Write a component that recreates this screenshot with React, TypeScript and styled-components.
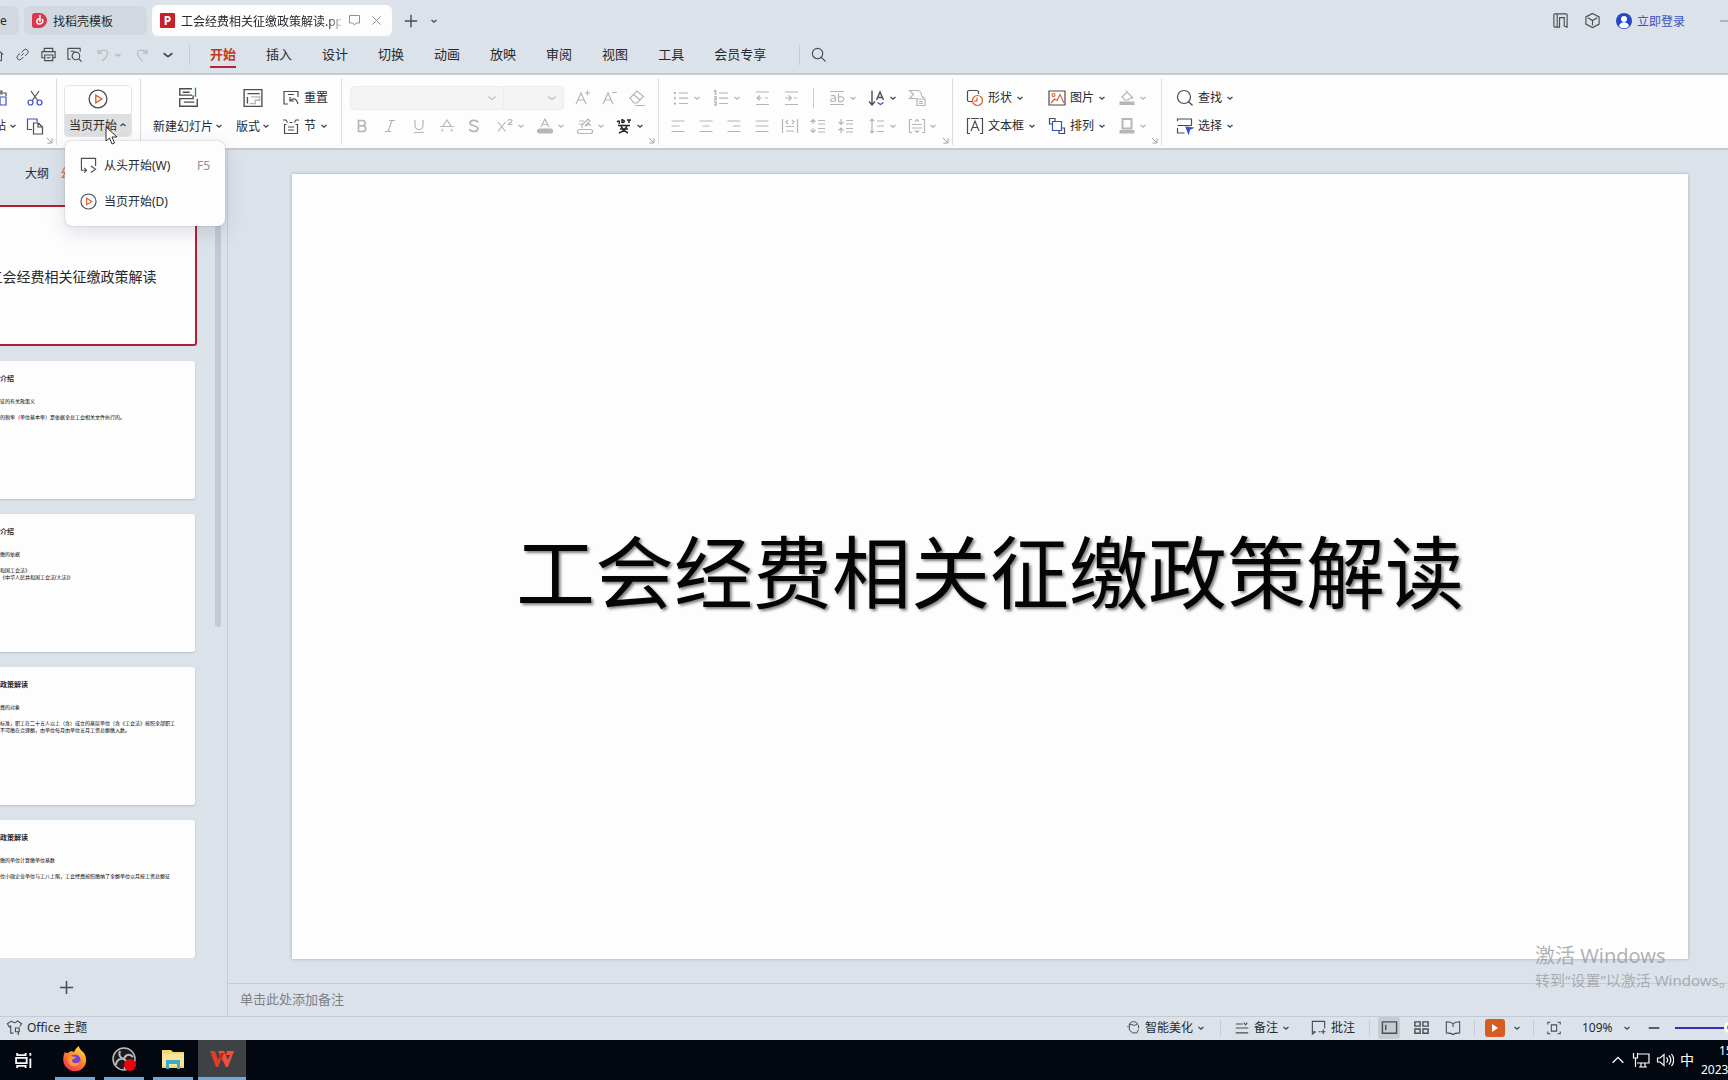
import React from "react";
import styled, { createGlobalStyle } from "styled-components";

const Global = createGlobalStyle`
  * { box-sizing: border-box; }
  html, body { margin: 0; padding: 0; overflow: hidden; }
  body, button, input, select, textarea {
    font-family: "Noto Sans", "Noto Sans CJK SC", sans-serif;
    font-size: 12px;
    color: #26292d;
  }
  button { border: 0; background: none; padding: 0; margin: 0; }
`;

const ink = "#4a4d52";
const faint = "#b4b6b9";
const blue = "#3d50c3";
const orange = "#d4632f";
const line = "#c5cbd4";
const chrome = "#dce2ea";

const Svg = styled.svg`
  flex: none;
  display: block;
  fill: none;
  stroke: currentColor;
  stroke-width: 1.2;
`;

const art: Record<string, React.ReactNode> = {
  home: <path d="M2 8.5 9 2.5l7 6M4 7v8.5h10V7M7.5 15v-5h3v5" />,
  link: <><path d="m7.5 10.5 3-3" /><path d="M8 6.500l2.500-2.800a3 3 0 0 1 4.400 4.300L12 10.500" /><path d="M10 12l-2.300 2.400a3 3 0 0 1-4.500-4.100L6 7.800" /></>,
  print: <path d="M4.500 6V2.500h9V6M4.500 12.500h-2.500V6h14v6.500h-2.500M5 9.500h8.500v6H5zM7 12.500h4" />,
  preview: <><path d="M5 14H2V2.500h13V6M5 5.500h4" /><circle cx="10.500" cy="10.500" r="4" /><path d="m13.500 13.500 3 3" /></>,
  undo: <path d="M3.500 2.500v4.500H8M3.500 7C8 1.500 15 3 14 8c-.5 3-3 5-6 8" />,
  redo: <path d="M14.500 2.500v4.500H10M14.500 7C10 1.500 3 3 4 8c.5 3 3 5 6 8" />,
  search: <><circle cx="8" cy="8" r="5.500" /><path d="m12 12 4.500 4.500" /></>,
  find: <><circle cx="8" cy="8" r="6.500" /><path d="m12.500 12.500 4 4" /></>,
  plus: <path d="M9 2v14M2 9h14" strokeWidth="1.600" />,
  close: <path d="m4 4 10 10m0-10L4 14" />,
  screen: <path d="M3 3h12v9h-4l-2 2.500L7 12H3z" />,
  paste: <><path d="M10 3.500H3v12h5M6 2h5v3H6zM12 4h3v3" /><path d="M9 8h6v8H9z" stroke={blue} /></>,
  cut: <><path d="m5 2 7 10M13 2 6 12" /><circle cx="4.500" cy="13.500" r="2.500" stroke={blue} /><circle cx="13.500" cy="13.500" r="2.500" stroke={blue} /></>,
  copy: <><path d="M6 12.500H1.500V2H11v3" stroke={blue} /><path d="M7.500 6h5l4 4v7h-9zM12 6.500V10h4" /></>,
  play: <><circle cx="9" cy="9" r="8" /><path d="m7 5.500 5.500 3.500L7 12.500z" stroke={orange} /></>,
  newSlide: <><path d="M12 1.500H1.500V7H12M4 4.500h6M13 7v3H1.500v6.500h15V10M5 13h9" /><path d="M15 .5v8" stroke="#3b8b6b" /></>,
  layout: <><path d="M1 1.500h16v15H1zM4 5h11M4 8v6" /><path d="M7 8h8v3h-4v3H6" stroke={faint} /></>,
  reset: <path d="M6 15H2V2.500h14V8M2 15h3M8 8v4h4M8.500 11.500c3-3 6-2 7.500 3.500M6 5.500h6" />,
  section: <path d="M1 3h3l1.500 2.500M17 3h-3l-1.500 2.500M4.500 7.500H2.500v9h13v-9h-2M6 10h6M6 13h6M7.500 5.500h3" />,
  bold: <path d="M5.500 3.500h4a2.600 2.600 0 0 1 0 5.300h-4zM5.500 8.800h4.800a2.900 2.900 0 0 1 0 5.700H5.500z" strokeWidth="1.700" />,
  italic: <path d="M8 3.500h6M4 14.500h6M11 3.500l-4 11" />,
  underline: <path d="M5 3v5.500a4 4 0 0 0 8 0V3M4 15.500h10" />,
  strike: <path d="m5 9 4-6 4 6M2 9.500h14M5 12l-1.500 2.500M13 12l1.500 2.500" />,
  shadow: <path d="M13 5.500C12 2.500 5 2.500 5 6s8 2 8 5.500-7.500 4-8.500.5" strokeWidth="1.700" />,
  sup: <path d="m2 5 7.500 9.500M9.500 5 2 14.500M12 4c0-2 4-2 4 0 0 1.500-4 3-4 3.500h4.500" />,
  fontColor: <><path d="m5 10 4-8 4 8M6.500 7.500h5" /><rect x="1.500" y="12" width="15" height="4" rx="2" fill="currentColor" /></>,
  marker: <><path d="M3 4h5M3 7h3v4M6 8l6-6 2 2-5 5M10 9c3-3 5-2 4 0" /><rect x="1.500" y="12.500" width="15" height="4" rx="2" /></>,
  pinyin: <path d="M2 5c2-2 3-1 2 2M7 2v4M7 3.500c3-1 3 2 0 2M12 3h4M14 3v3M3 8.500h12M6 8.500c1 3.500 3 5.500 7 7.500M12 8.500c-1 3.500-3 5.500-8 7.500M5 12h8" stroke="#26292d" strokeWidth="1.500" />,
  bigger: <path d="m2 15 5-11 5 11M4 11h6M11 4h5M13.500 1.500v5" />,
  smaller: <path d="m2 15 5-11 5 11M4 11h6M11 3.500h5" />,
  eraser: <path d="m2 9 7-7 6.500 5.500L9 14H6zM5.500 5.500l6.500 5.500M7 16.500h10" />,
  bullets: <><path d="M7 4h9M7 14.500h9M7 9.200h9" /><path d="M2 4h2M2 9.200h2M2 14.500h2" strokeWidth="2" /></>,
  numbers: <><path d="M7 4h9M7 9.200h9M7 14.500h9" /><path d="M2 2l1.500-.5V6M2 8h2v2.500H2M2 13h2v3H2" strokeWidth="1.600" /></>,
  outdent: <path d="M3 3h13M3 15.500h13M7 6.500 4 9l3 2.500M4 9h5M12 9h3" />,
  indent: <path d="M3 3h13M3 15.500h13M6.500 6.500l3 2.500-3 2.500M3 9h6M12 9h3" />,
  charScale: <><path d="M2 2.500h14M2 15.500h14" /><path d="M3 7c5-2 4.500 2 4.500 5.500M7.500 9c-6 0-6 3.500-3 3.500S7.500 11 7.500 9M10.500 4.500v8c7 1.500 7-6.500 0-4.500" /></>,
  sort: <><path d="M4 1.500v14M1 12.500l3 3.500 3-3.500M8.500 11l3.500-8 3.500 8M9.500 8.500h5" strokeWidth="1.400" /><path d="m9.500 13.500 3 2 3-2" stroke={blue} /></>,
  convert: <path d="M9 9.500H1.500l4-4-4-4H9c4 0 4.500 2 4.500 5M13.500 7l3 2M9 10h8v6.500H9zM11 12.500h4M11 14.500h4" />,
  left: <path d="M2.500 4h13M2.500 9h8M2.500 14.500h13" />,
  center: <path d="M2.500 4h13M5.500 9h7M2.500 14.500h13" />,
  right: <path d="M2.500 4h13M8 9h7.500M2.500 14.500h13" />,
  justify: <path d="M2.500 4h13M2.500 9h13M2.500 14.500h13" />,
  distribute: <path d="M1.500 2v14M16.500 2v14M5 9.500h8M5 14h8M7 3 5 5l2 2M11 3l2 2-2 2" />,
  spaceUp: <path d="M9 3.500h7M9 7h7M9 11.500h7M9 15h7M1.500 5 4 2.500 6.500 5M4 2.500V7M1.500 13 4 15.500 6.500 13M4 11v4.500" />,
  spaceDown: <path d="M9 3.500h7M9 7h7M9 11.500h7M9 15h7M1.500 5 4 7.500 6.500 5M4 2v5M1.500 13.500 4 11l2.500 2.500M4 11v5" />,
  spacing: <path d="M4 2v14M2 4l2-2 2 2M2 14l2 2 2-2M9 4h7M9 9h7M9 14.500h7" />,
  vAlign: <path d="M4 2.500H1.500v13H4M14 2.500h2.500v13H14M4 7.500h10M4 11h10M7 4.500l2-2 2 2M7 13.500l2 2 2-2" />,
  shapes: <><path d="M6 12.500H3a1.500 1.500 0 0 1-1.500-1.500V3A1.500 1.500 0 0 1 3 1.500h8A1.500 1.500 0 0 1 12.500 3v2" /><circle cx="11.500" cy="11.500" r="5" stroke={orange} /><path d="M11 8.500v3.500H8" stroke={orange} /></>,
  textBox: <path d="M4 1.500H1.500v15H4M14 1.500h2.500v15H14M5 14 9 4l4 10M6.500 10.500h5M5 1.500h8" strokeDasharray="none" />,
  picture: <><path d="M1 2h16v14H1z" /><circle cx="5.500" cy="6" r="1.500" stroke={orange} /><path d="m3 14 3.500-4 2.500 1.500 3-6L16 14" stroke={orange} /></>,
  arrange: <><path d="M4.500 4.500h9v9h-9z" stroke={blue} /><path d="M4 7H1.500V1.500H7V4M14 11h2.500v5.500H11V14" /></>,
  fill: <><path d="m4 8 5-5 5 5-4 3H7zM8 1.500l2 3M14.500 8v2" /><rect x="1.500" y="12.500" width="15" height="3.500" fill="currentColor" stroke="none" /></>,
  outline: <><path d="M4.500 2h9v9.500h-9z" strokeWidth="2" /><rect x="1.500" y="13" width="15" height="3.500" fill="currentColor" stroke="none" /></>,
  select: <><path d="M1.500 4V2h14v6.500H1.500M1.500 11v5h7M5 8.500h5" /><path d="m10 10 6.500 1-3 1.500-1 4z" fill={blue} stroke={blue} /></>,
  fromStart: <path d="M7 14H1.500V1.500h15v8M4.500 11.500 7 14l-2.500 2.500M11.500 9.500l5 3.500-5 3.500" />,
  split: <path d="M3 2h12a1 1 0 0 1 1 1v13l-3-1V6H8v10H3a1 1 0 0 1-1-1V3a1 1 0 0 1 1-1zM5.500 2v14" />,
  cube: <path d="m9 1.500 7 3.700v7.600l-7 3.700-7-3.700V5.200zM4 6l5 3 5-3M9 9v5" />,
  theme: <path d="M6 2 1.500 5l2 3.500L5 7.500V15h3M6 2c1 2.500 5 2.500 6 0l4.500 3-2 3M10 9.500h4v4h-4zM13 13.500V17" />,
  beautify: <path d="M4 5C6 1 12 1 14 5l-4 1.500L4 5v7l4 3.500M8 15.500h5l2-4M15 6v4M3 8H1.500" />,
  notes: <path d="M2 4.500h8M2 9h14M2 14.500h14M11 3l2 2.500L15 3" />,
  comment: <path d="M15.500 10V2.500h-13v11H6M2.500 13.500V16L6 13.500M9 13.500h2M14 11v5M11.500 13.500h5" />,
  normal: <path d="M1.500 3h15v12h-15zM5 6v6" strokeWidth="1.500" />,
  sorter: <path d="M2 3h5.500v4.500H2zM10.500 3H16v4.500h-5.500zM2 10.500h5.500V15H2zM10.500 10.500H16V15h-5.500z" strokeWidth="1.500" />,
  book: <path d="M9 4C7 2.500 4 2 1.500 2v12.500c3 0 5.500 0 7.500 2 2-2 4.500-2 7.500-2V2C14 2 11 2.500 9 4zM9 4v4" />,
  fit: <path d="M2 5V2.500h3M13 2.500h3V5M16 13v2.500h-3M5 15.500H2V13M6 5.500h6v7H6z" />,
  minus: <path d="M3 9h12" strokeWidth="2" />,
  up: <path d="m3 12 6-6 6 6" strokeWidth="1.500" />,
  network: <path d="M5 3h12v9H5M9 12v4M13 12v4M7 16h8M1.500 2v5h4V2M3.500 7v9" />,
  speaker: <path d="M1.500 7v4H4l4 3.500v-11L4 7zM10.500 6.500c1.500 1.500 1.500 3.500 0 5M13 4.500c2.500 3 2.500 6 0 9M15.500 3c3 4 3 8 0 12" />,
  taskView: <path d="M3 2v2h8V2M2 6.500h10v5H2zM3 16v-2h8v2M15.500 7v9M15.500 2v2.500" strokeWidth="1.700" />,
};

const Icon = ({ name, size = 18 }: { name: string; size?: number }) => (
  <Svg width={size} height={size} viewBox="0 0 18 18" aria-hidden="true">{art[name]}</Svg>
);

const Chevron = ({ up = false, size = 8 }: { up?: boolean; size?: number }) => (
  <Svg width={size} height={size} viewBox="0 0 8 8" aria-hidden="true">
    <path d={up ? "M1.500 5 4 3l2.500 2" : "M1.500 3 4 5l2.500-2"} strokeWidth={size > 8 ? 1 : 1.4} />
  </Svg>
);

const LauncherMark = styled.svg`
  position: absolute;
  right: 3px;
  bottom: 1px;
  fill: none;
  stroke: #9a9da1;
`;
const Launcher = () => (
  <LauncherMark width="7" height="7" viewBox="0 0 7 7" aria-hidden="true">
    <path d="M1 1l4 4M6 1.500v4.500H1.500" />
  </LauncherMark>
);

const Window = styled.div`
  position: relative;
  display: flex;
  flex-direction: column;
  height: 100vh;
  overflow: hidden;
  background: ${chrome};
  white-space: nowrap;
`;

/* ---------- title bar ---------- */
const TitleBar = styled.header`
  display: flex;
  align-items: center;
  height: 36px;
  padding-top: 5px;
  flex: none;
`;
const DocTab = styled.button<{ $w: number; $active?: boolean }>`
  display: flex;
  align-items: center;
  gap: 6px;
  width: ${(p) => p.$w}px;
  height: ${(p) => (p.$active ? 31 : 29)}px;
  margin-right: 5px;
  padding: 0 8px;
  border-radius: 6px;
  background: ${(p) => (p.$active ? "#fdfdfe" : "#d2d8e0")};
  &:first-child { padding: 0; border-radius: 0 6px 6px 0; }
`;
const TabName = styled.span`
  flex: 1;
  min-width: 0;
  overflow: hidden;
  text-align: left;
  mask-image: linear-gradient(90deg, #000 92%, rgba(0, 0, 0, 0.2));
`;
const TabIcons = styled.span`
  display: flex;
  align-items: center;
  gap: 7px;
  color: #8e9196;
`;
const Badge = styled.span<{ $round?: boolean }>`
  display: grid;
  place-items: center;
  flex: none;
  width: 15px;
  height: 15px;
  border-radius: ${(p) => (p.$round ? "3px 8px 8px 3px" : "1px")};
  background: ${(p) => (p.$round ? "#d93a4b" : "#c8202a")};
  color: #fff;
  font-weight: 700;
  line-height: 15px;
`;
const Tool = styled.button<{ $w?: number; $off?: boolean; $clip?: boolean; $gap?: number }>`
  display: flex;
  align-items: center;
  justify-content: ${(p) => (p.$clip ? "flex-end" : "flex-start")};
  gap: ${(p) => p.$gap ?? 3}px;
  flex: none;
  width: ${(p) => (p.$w ? `${p.$w}px` : "auto")};
  height: 24px;
  overflow: hidden;
  line-height: 24px;
  color: ${(p) => (p.$off ? faint : ink)};
`;
const Label = styled.span`color: #26292d;`;
const Spacer = styled.div`flex: 1;`;
const NewTab = styled.div`
  display: flex;
  align-items: center;
  gap: 11px;
  padding-left: 6px;
`;
const Login = styled.a`
  display: flex;
  align-items: center;
  gap: 5px;
  margin-right: 32px;
  color: ${blue};
  text-decoration: none;
`;

/* ---------- menu bar ---------- */
const MenuBar = styled.nav`
  display: flex;
  align-items: center;
  flex: none;
  height: 39px;
  border-bottom: 2px solid ${line};
`;
const QuickTools = styled.div`
  display: flex;
  padding-left: 10px;
`;
const Rule = styled.i<{ $h?: number; $m?: string }>`
  flex: none;
  width: 1px;
  height: ${(p) => p.$h ?? 20}px;
  margin: ${(p) => p.$m ?? "0"};
  background: ${line};
`;
const MenuTabs = styled.div`
  display: flex;
  gap: 30px;
`;
const MenuTab = styled.button<{ $on?: boolean }>`
  height: 27px;
  font-size: 13px;
  line-height: 24px;
  border-bottom: 2px solid ${(p) => (p.$on ? "#b52336" : "transparent")};
  color: ${(p) => (p.$on ? "#c23a22" : "#26292d")};
  font-weight: ${(p) => (p.$on ? 700 : 400)};
`;

/* ---------- ribbon ---------- */
const Ribbon = styled.section`
  display: flex;
  align-items: center;
  flex: none;
  height: 75px;
  background: #fdfdfe;
  border-bottom: 2px solid ${line};
`;
const Group = styled.div<{ $w: number; $pad?: number; $last?: boolean }>`
  position: relative;
  display: flex;
  align-items: center;
  flex: none;
  width: ${(p) => p.$w}px;
  height: 67px;
  padding-left: ${(p) => p.$pad ?? 0}px;
  border-right: ${(p) => (p.$last ? 0 : 1)}px solid #dcdee2;
`;
const Rows = styled.div`
  display: flex;
  flex-direction: column;
  gap: 4px;
`;
const Row = styled.div<{ $shift?: number }>`
  display: flex;
  align-items: center;
  height: 24px;
  padding-left: ${(p) => p.$shift ?? 0}px;
`;
const Stack = styled.button<{ $w: number }>`
  display: flex;
  flex-direction: column;
  align-items: center;
  gap: 4px;
  width: ${(p) => p.$w}px;
  color: ${ink};
`;
const StackRow = styled.span`
  display: flex;
  align-items: center;
  justify-content: center;
  gap: 2px;
  height: 24px;
`;
const PlayButton = styled.button`
  width: 68px;
  height: 52px;
  margin-bottom: 2px;
  border: 1px solid #e3e4e6;
  border-radius: 4px;
  overflow: hidden;
  color: ${ink};
`;
const PlayTop = styled.span`
  display: grid;
  place-items: center;
  height: 28px;
  padding-bottom: 2px;
`;
const PlayBottom = styled.span`
  display: flex;
  align-items: center;
  justify-content: center;
  gap: 2px;
  height: 22px;
  background: #dedfe0;
`;
const Fonts = styled.div`
  display: flex;
  width: 214px;
  height: 24px;
  margin-right: 10px;
  border: 1px solid #ececee;
  border-radius: 4px;
  background: #f4f4f5;
  color: #c2c4c7;
`;
const Combo = styled.label<{ $w: number }>`
  display: flex;
  align-items: center;
  width: ${(p) => p.$w}px;
  padding-right: 5px;
  & + & { border-left: 1px solid #ebebed; }
`;
const ComboSelect = styled.select`
  flex: 1;
  min-width: 0;
  height: 20px;
  border: 0;
  appearance: none;
  background: transparent;
`;
const DropMenu = styled.div`
  position: absolute;
  z-index: 5;
  top: 63px;
  left: 8px;
  width: 160px;
  padding: 6px 0 7px;
  border-radius: 7px;
  background: #fdfdfe;
  box-shadow: 0 0 2px rgba(60, 70, 90, 0.35), 0 6px 20px rgba(60, 70, 90, 0.16);
`;
const MenuItem = styled.button`
  display: flex;
  align-items: center;
  gap: 7px;
  width: 100%;
  height: 36px;
  padding: 0 15px;
  color: ${ink};
`;
const Shortcut = styled.kbd`
  margin-left: auto;
  font-family: inherit;
  color: #8d9095;
`;
const Pointer = styled.svg`
  position: absolute;
  z-index: 6;
  top: 48px;
  left: 48px;
`;

/* ---------- workspace ---------- */
const Work = styled.main`
  display: flex;
  flex: 1;
  min-height: 0;
`;
const Outline = styled.aside`
  display: flex;
  flex-direction: column;
  flex: none;
  width: 228px;
  border-right: 1px solid ${line};
`;
const PanelTabs = styled.div`
  display: flex;
  align-items: center;
  gap: 12px;
  flex: none;
  height: 46px;
  padding-left: 25px;
`;
const PanelTab = styled.button<{ $on?: boolean }>`
  color: ${(p) => (p.$on ? orange : "#26292d")};
`;
const Scroller = styled.div`
  display: flex;
  justify-content: space-between;
  padding: 9px 6px 0 0;
`;
const Thumbs = styled.div`
  display: flex;
  flex-direction: column;
  align-items: flex-end;
  gap: 15px;
  width: 197px;
  overflow: hidden;
`;
const Thumb = styled.article<{ $on?: boolean }>`
  flex: none;
  width: ${(p) => (p.$on ? 249 : 245)}px;
  height: ${(p) => (p.$on ? 141 : 138)}px;
  margin-right: ${(p) => (p.$on ? 0 : 2)}px;
  padding: 14px 0 0 ${(p) => (p.$on ? 0 : 50)}px;
  border: ${(p) => (p.$on ? "2px solid #b01f34" : "0")};
  border-radius: 3px;
  background: #fdfdfe;
  box-shadow: ${(p) => (p.$on ? "none" : "0 1px 2px rgba(90, 100, 120, 0.3)")};
  overflow: hidden;
`;
const ThumbHero = styled.h3`
  margin: 38px 0 0;
  font-size: 14px;
  font-weight: 400;
  line-height: 36px;
  text-align: center;
`;
const ThumbTitle = styled.h4`
  margin: 0 0 15px;
  font-size: 7px;
  line-height: 8px;
`;
const ThumbLine = styled.p<{ $gap?: number }>`
  margin: 0 0 ${(p) => p.$gap ?? 0}px;
  font-size: 5px;
  line-height: 7px;
  color: #000;
`;
const ScrollBar = styled.div`
  width: 6px;
  height: 422px;
  border-radius: 3px;
  background: #c3c8d1;
`;
const AddSlide = styled.button`
  display: grid;
  place-items: center;
  width: 24px;
  height: 24px;
  margin: 17px 0 0 54px;
  color: ${ink};
`;
const Editor = styled.section`
  display: flex;
  flex-direction: column;
  flex: 1;
  min-width: 0;
`;
const Stage = styled.div`
  flex: 1;
  min-height: 0;
  padding: 24px 40px 0 64px;
`;
const Slide = styled.article`
  display: grid;
  place-items: center;
  aspect-ratio: 16 / 9;
  padding-top: 12px;
  background: #fdfdfe;
  box-shadow: 0 0 3px rgba(90, 95, 105, 0.45);
`;
const SlideTitle = styled.h1`
  margin: 0;
  font-size: 79px;
  font-weight: 400;
  line-height: 110px;
  color: #050505;
  text-shadow: 2px 2px 3px rgba(0, 0, 0, 0.5);
`;
const Notes = styled.input`
  flex: none;
  width: 100%;
  height: 33px;
  padding: 0 12px 2px;
  border: 0;
  border-top: 1px solid ${line};
  background: transparent;
  font-size: 13px;
  &::placeholder { color: #7b8088; opacity: 1; }
`;

/* ---------- status bar ---------- */
const Status = styled.footer`
  display: flex;
  align-items: center;
  flex: none;
  height: 24px;
  padding: 0 0 2px 6px;
  border-top: 1px solid ${line};
`;
const ViewButton = styled.button<{ $on?: boolean }>`
  display: grid;
  place-items: center;
  width: 22px;
  height: 22px;
  margin-right: 10px;
  border-radius: 3px;
  background: ${(p) => (p.$on ? "#c6cad1" : "transparent")};
  color: ${ink};
`;
const ShowButton = styled.button`
  display: grid;
  place-items: center;
  width: 20px;
  height: 18px;
  margin-right: 8px;
  border-radius: 3px;
  background: #d65c20;
`;
const Zoom = styled.input`
  flex: none;
  width: 60px;
  height: 14px;
  margin: 0 -7px 0 13px;
  appearance: none;
  background: linear-gradient(#3530b4, #3530b4) center / 100% 2px no-repeat;
  &::-webkit-slider-thumb {
    appearance: none;
    width: 11px;
    height: 11px;
    border: 3px solid #fff;
    border-radius: 50%;
    background: #777;
  }
`;

/* ---------- desktop ---------- */
const TaskBar = styled.footer`
  display: flex;
  align-items: stretch;
  flex: none;
  height: 40px;
  background: #040911;
  color: #fff;
`;
const TaskView = styled.button`
  display: grid;
  align-items: center;
  width: 55px;
  padding-left: 14px;
  color: #fff;
`;
const TaskApp = styled.button<{ $w: number; $on?: boolean; $gap?: number }>`
  display: grid;
  place-items: center;
  width: ${(p) => p.$w}px;
  margin-right: ${(p) => p.$gap ?? 0}px;
  border-bottom: 3px solid #76a7d2;
  background: ${(p) => (p.$on ? "#3e4245" : "transparent")};
`;
const Tray = styled.div`
  display: flex;
  align-items: center;
  gap: 6px;
  margin: 0 7px 0 auto;
`;
const Ime = styled.span`
  font-size: 14px;
  line-height: 20px;
`;
const Clock = styled.time`
  display: flex;
  flex-direction: column;
  justify-content: center;
  flex: none;
  width: 27px;
  overflow: hidden;
  line-height: 19px;
`;
const Hour = styled.span`padding-left: 18px;`;
const Watermark = styled.div`
  position: absolute;
  right: 0;
  bottom: 89px;
  width: 193px;
  overflow: hidden;
  color: rgba(145, 149, 155, 0.72);
  font-size: 15px;
  line-height: 22px;
  pointer-events: none;
`;
const WatermarkTitle = styled.div`
  font-size: 20px;
  line-height: 26px;
`;

const menus = ["开始", "插入", "设计", "切换", "动画", "放映", "审阅", "视图", "工具", "会员专享"];

type Cell = { icon: string; w: number; drop?: boolean; dark?: boolean };
const fontCells: Cell[] = [
  { icon: "bold", w: 28 }, { icon: "italic", w: 29 }, { icon: "underline", w: 28 },
  { icon: "strike", w: 27 }, { icon: "shadow", w: 31 }, { icon: "sup", w: 40, drop: true },
  { icon: "fontColor", w: 40, drop: true }, { icon: "marker", w: 39, drop: true },
  { icon: "pinyin", w: 30, drop: true, dark: true },
];
const paraTop: Cell[] = [
  { icon: "bullets", w: 40, drop: true }, { icon: "numbers", w: 41, drop: true },
  { icon: "outdent", w: 29 }, { icon: "indent", w: 29 },
];
const paraTopEnd: Cell[] = [
  { icon: "charScale", w: 40, drop: true }, { icon: "sort", w: 40, drop: true, dark: true }, { icon: "convert", w: 30 },
];
const paraBottom: Cell[] = [
  { icon: "left", w: 28 }, { icon: "center", w: 28 }, { icon: "right", w: 28 }, { icon: "justify", w: 28 },
  { icon: "distribute", w: 28 }, { icon: "spaceUp", w: 28 }, { icon: "spaceDown", w: 31 },
  { icon: "spacing", w: 40, drop: true }, { icon: "vAlign", w: 34, drop: true },
];

const Cells = ({ items }: { items: Cell[] }) => (
  <>
    {items.map((c) => (
      <Tool key={c.icon} $w={c.w} $off={!c.dark} aria-label={c.icon}>
        <Icon name={c.icon} />
        {c.drop && <Chevron />}
      </Tool>
    ))}
  </>
);

const LabelTool = ({ icon, text, w, drop = true }: { icon: string; text: string; w?: number; drop?: boolean }) => (
  <Tool $w={w} $gap={4}>
    <Icon name={icon} />
    <Label>{text}</Label>
    {drop && <Chevron />}
  </Tool>
);

const Firefox = () => (
  <svg width="26" height="26" viewBox="0 0 26 26" aria-hidden="true">
    <defs>
      <linearGradient id="fox" x1="0.8" y1="0" x2="0.2" y2="1">
        <stop offset="0" stopColor="#ffe44d" /><stop offset="0.45" stopColor="#ff8a26" /><stop offset="1" stopColor="#ee2a62" />
      </linearGradient>
    </defs>
    <path d="M3 6c1 1 2 1 3 1 2-2 4-2 6-1 1-2 2-4 5-6 0 3 2 4 5 7 3 5 3 11-1 15-5 5-13 4-17-1-4-5-3-11-1-15z" fill="url(#fox)" />
    <circle cx="13" cy="14" r="5.500" fill="#7542d9" />
    <path d="M6 11c3-2 5 0 8 0-1 2-4 2-4 4 1 3 6 3 8 0-1 7-11 7-12 0z" fill="#ff9a2a" />
  </svg>
);
const Obs = () => (
  <svg width="26" height="26" viewBox="0 0 26 26" aria-hidden="true">
    <circle cx="13" cy="13" r="11" fill="#1c1c20" stroke="#b9babd" strokeWidth="1.500" />
    <path d="M9 5c-2 5 1 7 4 8 1-4 5-6 9-2M13 13c-5-1-8 2-8 6M13 13c4 3 3 7 0 10" fill="none" stroke="#b9babd" strokeWidth="2" />
    <circle cx="19" cy="19" r="6" fill="#e8060c" />
  </svg>
);
const Folder = () => (
  <svg width="24" height="22" viewBox="0 0 24 22" aria-hidden="true">
    <path d="M1 2h9l2 2h11v16H1z" fill="#f5d66b" /><path d="M1 6h22v12H1z" fill="#fbe695" />
    <path d="M5 12h14v9h-3v-5H8v5H5z" fill="#3fa9d0" />
  </svg>
);
const Wps = () => (
  <svg width="26" height="20" viewBox="0 0 26 20" aria-hidden="true">
    <path d="M1 2h5l3 9 3-7h3L9 18H7z" fill="#e33c28" />
    <path d="M9 2h6l4 9 2-5h-4l1-4h7l-6 16h-2z" fill="#f0503a" />
    <path d="M12 4h3l-3 7-1-3z" fill="#b32418" />
  </svg>
);

export default function App() {
  return (
    <Window>
      <Global />
      <TitleBar>
        <DocTab $w={19}>e</DocTab>
        <DocTab $w={123}><Badge $round>
          <svg width="9" height="11" viewBox="0 0 9 11" aria-hidden="true"><path d="M5 0v7M5 4C1 3 1 9 4 9s5-2 3-5" fill="none" stroke="#fff" strokeWidth="1.500" /></svg>
        </Badge>找稻壳模板</DocTab>
        <DocTab $w={240} $active>
          <Badge>P</Badge>
          <TabName>工会经费相关征缴政策解读.pptx</TabName>
          <TabIcons><Icon name="screen" size={15} /><Icon name="close" size={15} /></TabIcons>
        </DocTab>
        <NewTab>
          <Tool aria-label="新建"><Icon name="plus" size={16} /></Tool>
          <Tool aria-label="更多"><Chevron /></Tool>
        </NewTab>
        <Spacer />
        <Tool $w={32} aria-label="窗口"><Icon name="split" size={17} /></Tool>
        <Tool $w={32} aria-label="应用"><Icon name="cube" size={17} /></Tool>
        <Login href="#login">
          <svg width="16" height="16" viewBox="0 0 16 16" aria-hidden="true">
            <circle cx="8" cy="8" r="8" fill="#2447c8" /><circle cx="8" cy="6" r="3" fill="#fff" /><path d="M3 13c1-5 9-5 10 0-2 3-8 3-10 0z" fill="#fff" />
          </svg>
          立即登录
        </Login>
        <Tool $w={11} $off aria-label="最小化"><Icon name="minus" /></Tool>
      </TitleBar>

      <MenuBar>
        <Tool $w={5} $clip aria-label="首页"><Icon name="home" size={16} /></Tool>
        <QuickTools>
          <Tool $w={25} aria-label="链接"><Icon name="link" size={15} /></Tool>
          <Tool $w={26} aria-label="打印"><Icon name="print" size={17} /></Tool>
          <Tool $w={29} aria-label="打印预览"><Icon name="preview" size={17} /></Tool>
          <Tool $w={39} $off aria-label="撤销"><Icon name="undo" size={16} /><Chevron /></Tool>
          <Tool $w={27} $off aria-label="恢复"><Icon name="redo" size={16} /></Tool>
          <Tool aria-label="更多命令"><Chevron size={14} /></Tool>
        </QuickTools>
        <Rule $m="0 20px 0 14px" />
        <MenuTabs>
          {menus.map((m, i) => <MenuTab key={m} $on={i === 0}>{m}</MenuTab>)}
        </MenuTabs>
        <Rule $m="0 10px 0 33px" />
        <Tool aria-label="搜索"><Icon name="search" size={17} /></Tool>
      </MenuBar>

      <Ribbon>
        <Group $w={57}>
          <Rows>
            <Row><Tool $w={26} aria-label="粘贴"><Tool as="span" $w={9} $clip><Icon name="paste" /></Tool></Tool><Tool aria-label="剪切"><Icon name="cut" /></Tool></Row>
            <Row><Tool $w={26}><Tool as="span" $w={6} $clip><Label>粘贴</Label></Tool><Chevron /></Tool><Tool aria-label="复制"><Icon name="copy" /></Tool></Row>
          </Rows>
          <Launcher />
        </Group>
        <Group $w={84} $pad={7}>
          <PlayButton>
            <PlayTop><Icon name="play" size={20} /></PlayTop>
            <PlayBottom><Label>当页开始</Label><Chevron up /></PlayBottom>
          </PlayButton>
          <DropMenu role="menu">
            <MenuItem role="menuitem"><Icon name="fromStart" size={17} /><Label>从头开始(W)</Label><Shortcut>F5</Shortcut></MenuItem>
            <MenuItem role="menuitem"><Icon name="play" size={17} /><Label>当页开始(D)</Label></MenuItem>
          </DropMenu>
          <Pointer width="13" height="19" viewBox="0 0 13 19" aria-hidden="true">
            <path d="M1 1v14l3.500-3 2.500 6 2.500-1-2.500-6H12z" fill="#fff" stroke="#333" />
          </Pointer>
        </Group>
        <Group $w={201} $pad={7}>
          <Stack $w={80}>
            <StackRow><Icon name="newSlide" size={21} /></StackRow>
            <StackRow><Label>新建幻灯片</Label><Chevron /></StackRow>
          </Stack>
          <Stack $w={50}>
            <StackRow><Icon name="layout" size={20} /></StackRow>
            <StackRow><Label>版式</Label><Chevron /></StackRow>
          </Stack>
          <Rows>
            <Row $shift={4}><LabelTool icon="reset" text="重置" drop={false} /></Row>
            <Row $shift={4}><LabelTool icon="section" text="节" /></Row>
          </Rows>
        </Group>
        <Group $w={317} $pad={8}>
          <Rows>
            <Row>
              <Fonts>
                <Combo $w={152}><ComboSelect disabled aria-label="字体" /><Chevron size={12} /></Combo>
                <Combo $w={60}><ComboSelect disabled aria-label="字号" /><Chevron size={12} /></Combo>
              </Fonts>
              <Cells items={[{ icon: "bigger", w: 27 }, { icon: "smaller", w: 27 }, { icon: "eraser", w: 18 }]} />
            </Row>
            <Row $shift={3}><Cells items={fontCells} /></Row>
          </Rows>
          <Launcher />
        </Group>
        <Group $w={294} $pad={10}>
          <Rows>
            <Row $shift={3}><Cells items={paraTop} /><Rule $m="0 14px 0 2px" /><Cells items={paraTopEnd} /></Row>
            <Row><Cells items={paraBottom} /></Row>
          </Rows>
          <Launcher />
        </Group>
        <Group $w={209} $pad={13}>
          <Rows>
            <Row><LabelTool icon="shapes" text="形状" w={82} /><LabelTool icon="picture" text="图片" w={70} /><Cells items={[{ icon: "fill", w: 34, drop: true }]} /></Row>
            <Row><LabelTool icon="textBox" text="文本框" w={82} /><LabelTool icon="arrange" text="排列" w={70} /><Cells items={[{ icon: "outline", w: 34, drop: true }]} /></Row>
          </Rows>
          <Launcher />
        </Group>
        <Group $w={90} $pad={14} $last>
          <Rows>
            <Row><LabelTool icon="find" text="查找" /></Row>
            <Row><LabelTool icon="select" text="选择" /></Row>
          </Rows>
        </Group>
      </Ribbon>

      <Work>
        <Outline>
          <PanelTabs><PanelTab>大纲</PanelTab><PanelTab $on>幻灯片</PanelTab></PanelTabs>
          <Scroller>
            <Thumbs>
              <Thumb $on><ThumbHero>工会经费相关征缴政策解读</ThumbHero></Thumb>
              <Thumb>
                <ThumbTitle>介绍</ThumbTitle>
                <ThumbLine $gap={9}>征的有关政策义</ThumbLine>
                <ThumbLine>的税率（单位基本率）是依据全总工会相关文件执行的。</ThumbLine>
              </Thumb>
              <Thumb>
                <ThumbTitle>介绍</ThumbTitle>
                <ThumbLine $gap={9}>缴的依据</ThumbLine>
                <ThumbLine>和国工会法》</ThumbLine>
                <ThumbLine>《中华人民共和国工会法(大法)》</ThumbLine>
              </Thumb>
              <Thumb>
                <ThumbTitle>政策解读</ThumbTitle>
                <ThumbLine $gap={9}>费的对象</ThumbLine>
                <ThumbLine>标准，职工在二十五人以上（含）成立的基层单位（含《工会法》按照全部职工</ThumbLine>
                <ThumbLine>不可缴在合理额，由单位每月由单位五月工资总额缴入数。</ThumbLine>
              </Thumb>
              <Thumb>
                <ThumbTitle>政策解读</ThumbTitle>
                <ThumbLine $gap={9}>缴的单位计算缴单位基数</ThumbLine>
                <ThumbLine>位小微企业单位与工八上限，工会经费按照缴纳了全额单位以月按工资总额征</ThumbLine>
              </Thumb>
            </Thumbs>
            <ScrollBar />
          </Scroller>
          <AddSlide aria-label="新建幻灯片"><Icon name="plus" size={17} /></AddSlide>
        </Outline>
        <Editor>
          <Stage><Slide><SlideTitle>工会经费相关征缴政策解读</SlideTitle></Slide></Stage>
          <Notes placeholder="单击此处添加备注" aria-label="备注" />
        </Editor>
      </Work>

      <Status>
        <Tool $gap={4}><Icon name="theme" size={17} /><Label>Office 主题</Label></Tool>
        <Spacer />
        <Tool $gap={4}><Icon name="beautify" size={15} /><Label>智能美化</Label><Chevron /></Tool>
        <Rule $h={16} $m="0 13px 0 15px" />
        <Tool $w={76} $gap={4}><Icon name="notes" size={16} /><Label>备注</Label><Chevron /></Tool>
        <Tool $gap={4}><Icon name="comment" size={17} /><Label>批注</Label></Tool>
        <Rule $h={16} $m="0 8px 0 14px" />
        <ViewButton $on aria-label="普通视图"><Icon name="normal" size={17} /></ViewButton>
        <ViewButton aria-label="幻灯片浏览"><Icon name="sorter" size={17} /></ViewButton>
        <ViewButton aria-label="阅读视图"><Icon name="book" size={16} /></ViewButton>
        <Rule $h={16} $m="0 10px 0 0" />
        <ShowButton aria-label="放映"><svg width="8" height="10" viewBox="0 0 8 10" aria-hidden="true"><path d="m1 1 6 4-6 4z" fill="#fff" /></svg></ShowButton>
        <Tool aria-label="放映选项"><Chevron /></Tool>
        <Rule $h={16} $m="0 12px" />
        <Tool $w={36} aria-label="适应窗口"><Icon name="fit" size={16} /></Tool>
        <Tool $w={64} $gap={10}><Label>109%</Label><Chevron /></Tool>
        <Tool aria-label="缩小"><Icon name="minus" size={16} /></Tool>
        <Zoom type="range" min="10" max="109" defaultValue="109" aria-label="缩放" />
      </Status>

      <TaskBar>
        <TaskView aria-label="任务视图"><Icon name="taskView" size={19} /></TaskView>
        <TaskApp $w={40} $gap={9} aria-label="Firefox"><Firefox /></TaskApp>
        <TaskApp $w={40} $gap={9} aria-label="OBS"><Obs /></TaskApp>
        <TaskApp $w={40} $gap={5} aria-label="文件资源管理器"><Folder /></TaskApp>
        <TaskApp $w={48} $on aria-label="WPS"><Wps /></TaskApp>
        <Tray>
          <Icon name="up" size={16} />
          <Icon name="network" />
          <Icon name="speaker" />
          <Ime>中</Ime>
        </Tray>
        <Clock><Hour>15</Hour><span>2023</span></Clock>
      </TaskBar>

      <Watermark>
        <WatermarkTitle>激活 Windows</WatermarkTitle>
        转到“设置”以激活 Windows。
      </Watermark>
    </Window>
  );
}
